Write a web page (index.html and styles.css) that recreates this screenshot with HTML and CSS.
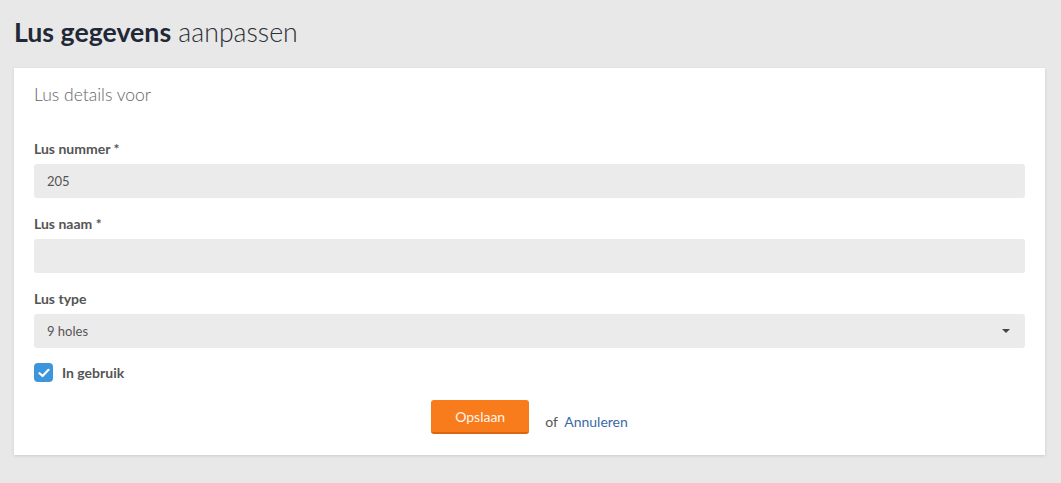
FILE: index.html
```html
<!DOCTYPE html>
<html>
	<head>
		<meta charset="utf-8" />
		<title>Lus gegevens aanpassen</title>
		<link rel="stylesheet" href="styles.css">
	</head>
	<body>
		<h1 class="page-title"><b>Lus gegevens</b> aanpassen</h1>

		<div class="card">
			<h2 class="card-title">Lus details voor</h2>

			<div class="field">
				<label>Lus nummer *</label>
				<div class="input">205</div>
			</div>

			<div class="field">
				<label>Lus naam *</label>
				<div class="input"></div>
			</div>

			<div class="field">
				<label>Lus type</label>
				<div class="input select">
					<span>9 holes</span>
					<span class="caret"></span>
				</div>
			</div>

			<div class="check">
				<span class="box">
					<svg width="12" height="10" viewBox="0 0 12 10"><path d="M1.5 5.2 L4.6 8 L10.5 1.8" fill="none" stroke="#fff" stroke-width="2.2" stroke-linecap="round" stroke-linejoin="round"/></svg>
				</span>
				<span class="check-label">In gebruik</span>
			</div>

			<div class="actions">
				<button class="save" type="button">Opslaan</button>
				<span class="or">of <a href="#">Annuleren</a></span>
			</div>
		</div>
	</body>
</html>
```

FILE: styles.css
```css
body{
	margin:0;
	background-color:#e8e8e8;
	font-family:Lato,"Open Sans",sans-serif;
	color:#555;
	padding:0 16px 28px 14px;
}
.page-title{
	margin:0;
	padding:14px 0 0 0;
	height:68px;
	box-sizing:border-box;
	font-size:26.7px;
	font-weight:300;
	color:#2b2f36;
	line-height:36px;
}
.page-title b{
	font-weight:700;
	color:#222836;
}
.card{
	background-color:#ffffff;
	box-shadow:0 1px 3px rgba(0,0,0,0.12);
	padding:16px 20px 21px 20px;
}
.card-title{
	margin:0 0 35px 0;
	font-size:17.5px;
	font-weight:300;
	color:#666;
	line-height:22px;
}
.field{
	display:flex;
	flex-direction:column;
	gap:7px;
	margin-bottom:18px;
}
.field label{
	font-size:14px;
	font-weight:700;
	line-height:16px;
	color:#555;
}
.input{
	height:34px;
	background-color:#ebebeb;
	border-radius:3px;
	padding:0 13px;
	display:flex;
	align-items:center;
	font-size:13px;
	color:#555;
}
.select{
	justify-content:space-between;
}
.caret{
	width:0;
	height:0;
	border-left:4px solid transparent;
	border-right:4px solid transparent;
	border-top:4px solid #444;
	margin-right:2px;
}
.check{
	display:flex;
	align-items:center;
	gap:9px;
	margin-top:-3px;
}
.box{
	width:19px;
	height:19px;
	border-radius:4px;
	background-color:#3d95dc;
	display:flex;
	align-items:center;
	justify-content:center;
}
.check-label{
	font-size:14px;
	font-weight:700;
	color:#555;
}
.actions{
	display:flex;
	justify-content:center;
	align-items:center;
	gap:16px;
	margin-top:18px;
}
.save{
	width:98px;
	height:34px;
	border:0;
	border-bottom:2px solid #dc6510;
	border-radius:3px;
	background-color:#f97c1c;
	color:#fff5ea;
	font-family:Lato,sans-serif;
	font-size:14px;
	font-weight:400;
	padding:0;
}
.or{
	font-size:14px;
	color:#555;
	padding-top:8px;
}
.or a{
	color:#3a6aa5;
	text-decoration:none;
	margin-left:3px;
}
```
